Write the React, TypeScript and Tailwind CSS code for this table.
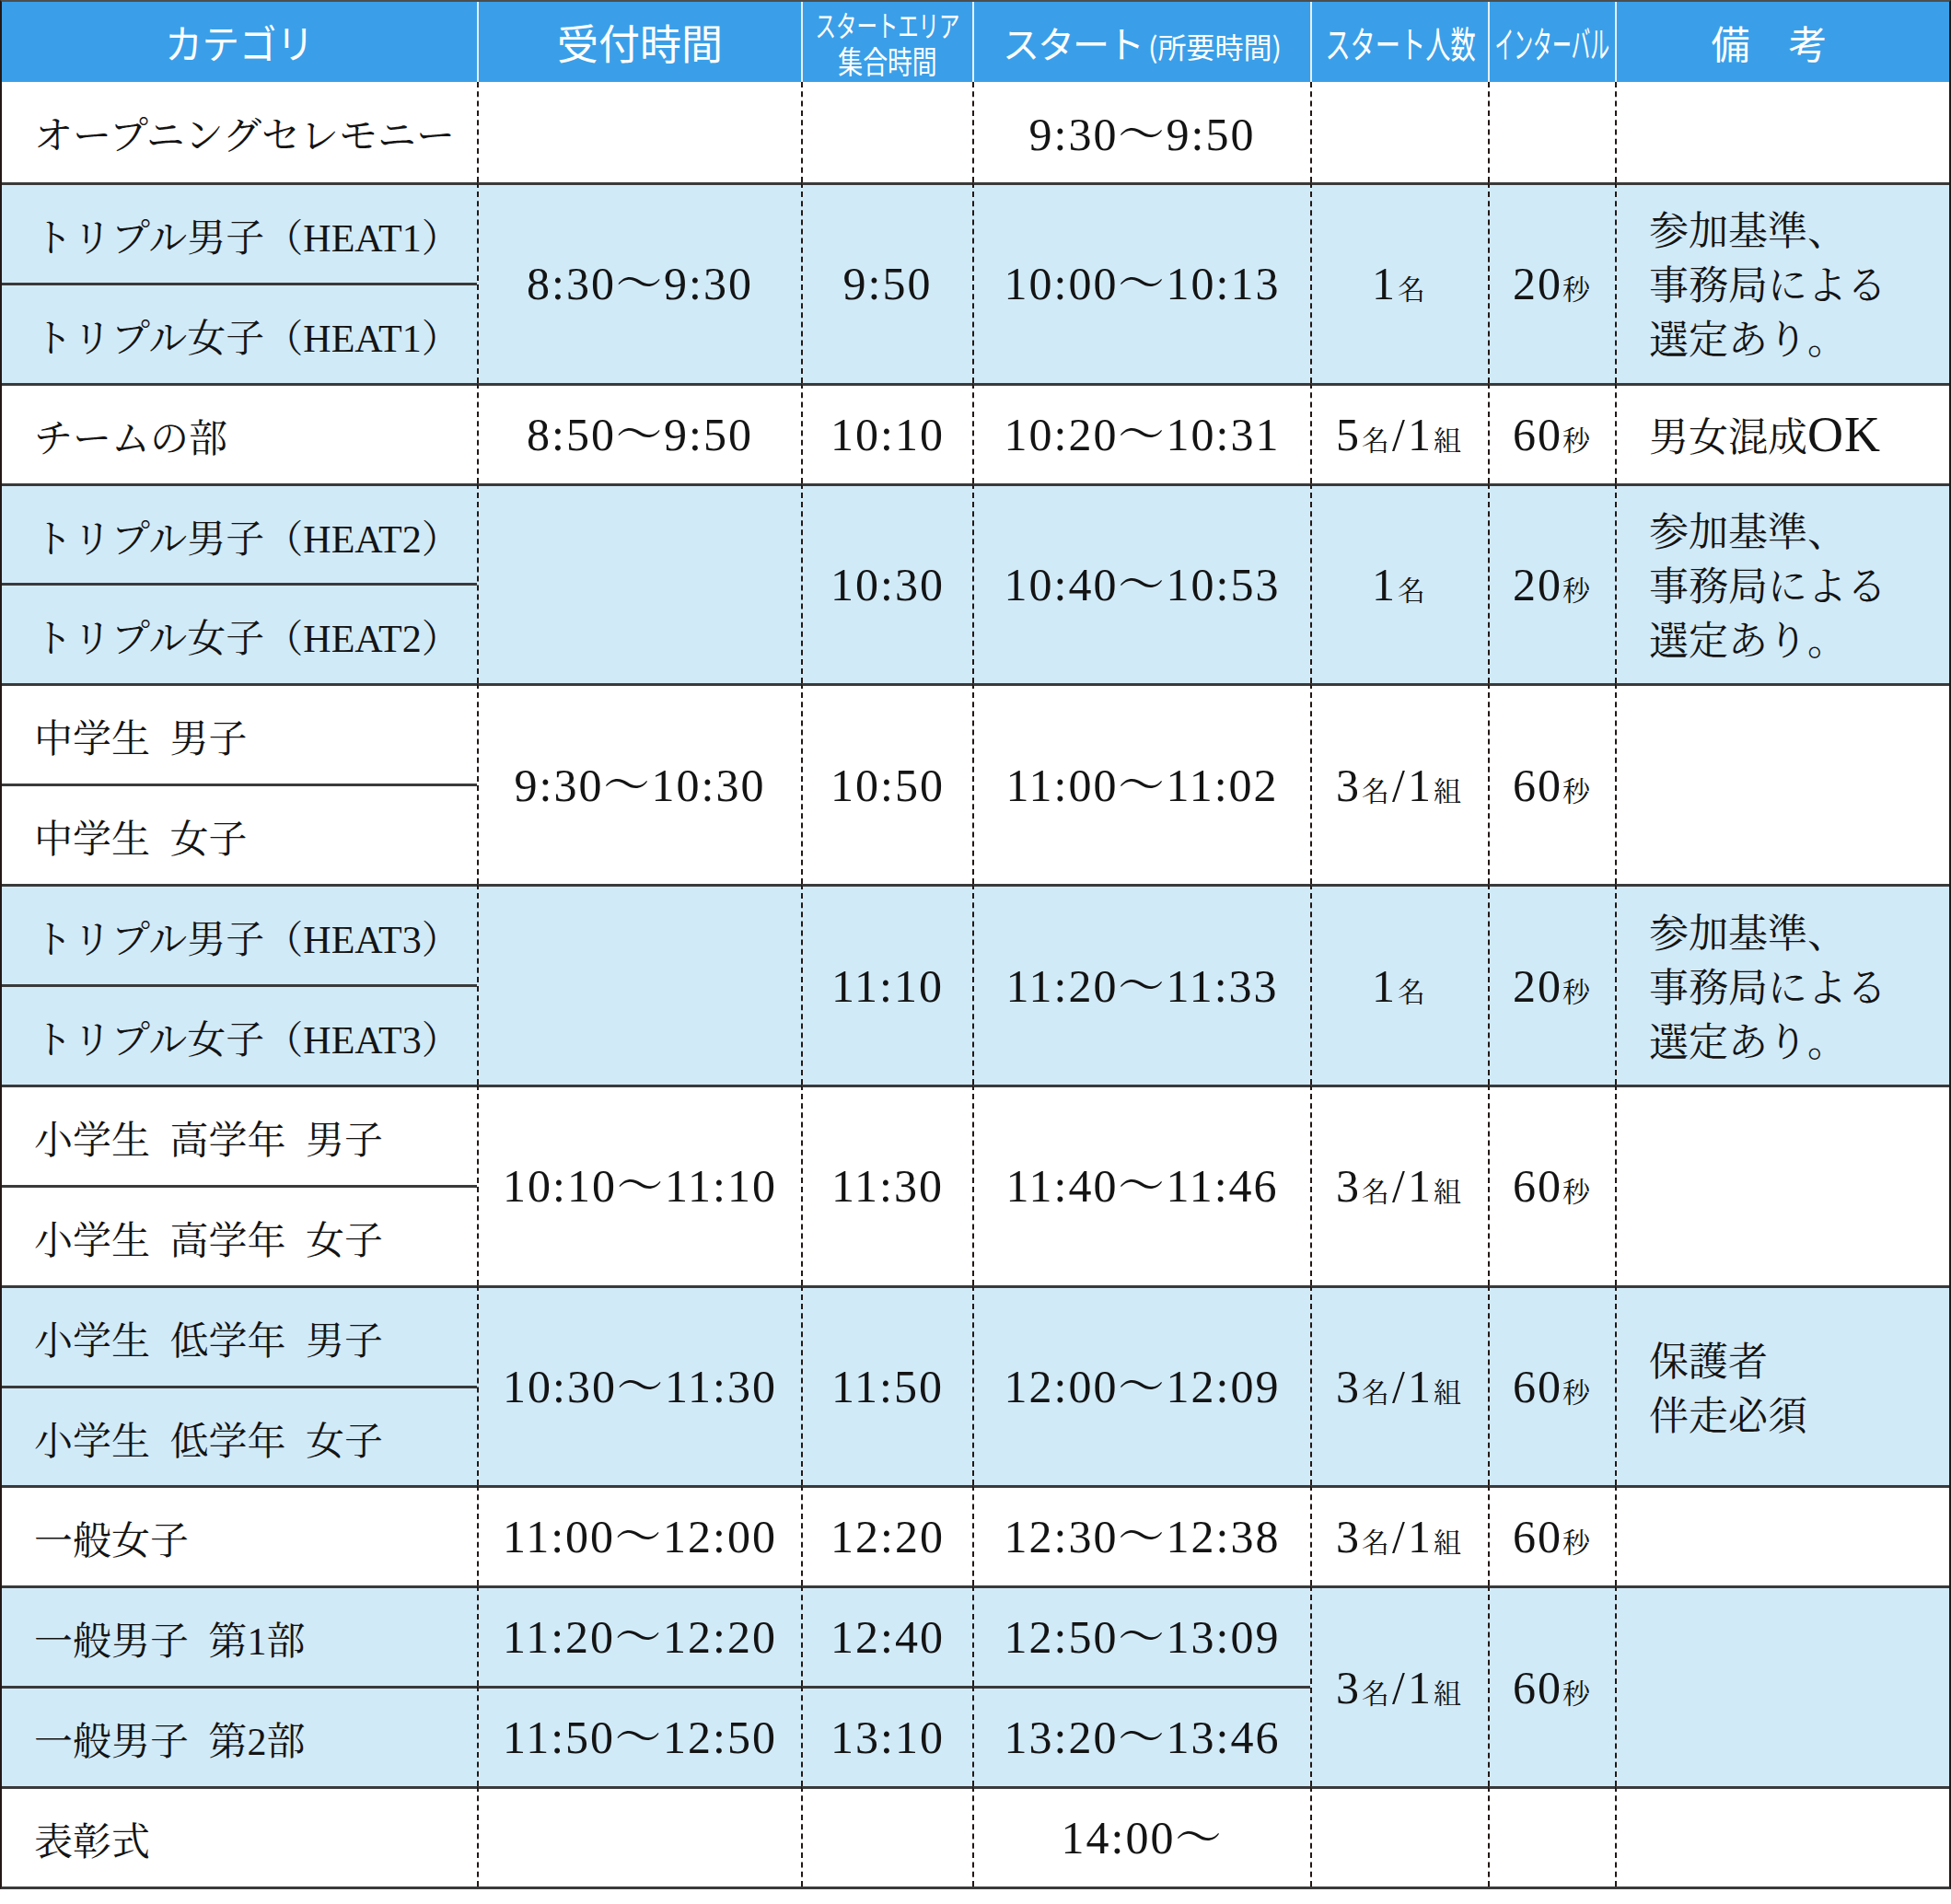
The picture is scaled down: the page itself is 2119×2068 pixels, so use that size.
import type { ReactNode } from "react";

// borders are drawn per cell: solid rule on top, dashed rule on the left
const rule = "[border-top:3px_solid_#3a3a3a]";
const dash = "[border-left:2px_dashed_#231815]";
const hsep = "[border-left:2px_solid_#e8eff4]";

function Cat({ children, top = true }: { children: ReactNode; top?: boolean }) {
  return (
    <td
      className={`p-0 pt-[10px] pl-[35px] text-left align-middle text-[42px] leading-none whitespace-nowrap [word-spacing:11px] ${
        top ? rule : ""
      }`}
    >
      {children}
    </td>
  );
}

function Cell({
  children,
  rowSpan,
  top = false,
}: {
  children?: ReactNode;
  rowSpan?: number;
  top?: boolean;
}) {
  return (
    <td
      rowSpan={rowSpan}
      className={`p-0 text-center align-middle leading-none whitespace-nowrap ${dash} ${top ? rule : ""}`}
    >
      {children}
    </td>
  );
}

function Note({
  children,
  rowSpan,
  top = false,
}: {
  children?: ReactNode;
  rowSpan?: number;
  top?: boolean;
}) {
  return (
    <td
      rowSpan={rowSpan}
      className={`p-0 pt-[5px] pl-[35px] text-left align-middle text-[43px] leading-[59px] whitespace-nowrap ${dash} ${
        top ? rule : ""
      }`}
    >
      {children}
    </td>
  );
}

function Tm({ children }: { children: ReactNode }) {
  return <span className="text-[50px] tracking-[2px]">{children}</span>;
}

function Cnt({ n, group }: { n: string; group?: boolean }) {
  return (
    <span className="tracking-[3px]">
      <span className="text-[50px]">{n}</span>
      <span className="text-[30px]">名</span>
      {group && (
        <>
          <span className="text-[50px]">/1</span>
          <span className="text-[30px]">組</span>
        </>
      )}
    </span>
  );
}

function Sec({ n }: { n: string }) {
  return (
    <span className="tracking-[2px]">
      <span className="text-[50px]">{n}</span>
      <span className="text-[30px]">秒</span>
    </span>
  );
}

function Head() {
  return (
    <tr className="h-[87px] bg-[#3a9fe8] text-white font-['Noto_Sans_CJK_JP','Noto_Sans',sans-serif]">
      <th className="p-0 font-normal">
        <div className="flex justify-center">
          <span className="shrink-0 whitespace-nowrap text-[43px] leading-none scale-x-[0.94]">カテゴリ</span>
        </div>
      </th>
      <th className={`p-0 font-normal ${hsep}`}>
        <div className="flex justify-center">
          <span className="shrink-0 whitespace-nowrap text-[45px] leading-none">受付時間</span>
        </div>
      </th>
      <th className={`p-0 font-normal ${hsep}`}>
        <div className="mt-[2px] flex flex-col items-center gap-[7px] leading-none">
          <span className="shrink-0 whitespace-nowrap text-[32px] scale-x-[0.7]">スタートエリア</span>
          <span className="shrink-0 whitespace-nowrap text-[34px] scale-x-[0.79]">集合時間</span>
        </div>
      </th>
      <th className={`p-0 font-normal ${hsep}`}>
        <div className="flex items-baseline justify-center whitespace-nowrap leading-none">
          <span className="text-[40px] tracking-[-2px]">スタート</span>
          <span className="ml-[6px] text-[31px]">(所要時間)</span>
        </div>
      </th>
      <th className={`p-0 font-normal ${hsep}`}>
        <div className="flex justify-center">
          <span className="shrink-0 whitespace-nowrap text-[40px] leading-none scale-x-[0.68]">スタート人数</span>
        </div>
      </th>
      <th className={`p-0 font-normal ${hsep}`}>
        <div className="flex justify-center">
          <span className="shrink-0 whitespace-nowrap text-[40px] leading-none scale-x-[0.52]">インターバル</span>
        </div>
      </th>
      <th className={`p-0 pr-[30px] font-normal ${hsep}`}>
        <div className="flex justify-center">
          <span className="shrink-0 whitespace-nowrap text-[42px] leading-none">備　考</span>
        </div>
      </th>
    </tr>
  );
}

const blue = "h-[108.9px] bg-[#d1eaf8]";
const white = "h-[108.9px] bg-white";

export default function App() {
  return (
    <div className="bg-white">
      <table className="w-[2119px] table-fixed border-separate border-spacing-0 text-[#141414] font-['Liberation_Serif','Noto_Serif_CJK_JP','Noto_Sans_CJK_JP',serif] [border-top:2px_solid_#4d4d4d] [border-left:2px_solid_#231815] [border-right:2px_solid_#231815] [border-bottom:3px_solid_#3a3a3a]">
        <colgroup>
          <col className="w-[516px]" />
          <col className="w-[352px]" />
          <col className="w-[186px]" />
          <col className="w-[367px]" />
          <col className="w-[193px]" />
          <col className="w-[138px]" />
          <col className="w-[363px]" />
        </colgroup>
        <thead>
          <Head />
        </thead>
        <tbody>
          <tr className={white}>
            <Cat top={false}>オープニングセレモニー</Cat>
            <Cell />
            <Cell />
            <Cell>
              <span className="relative top-[3px]">
                <Tm>9:30〜9:50</Tm>
              </span>
            </Cell>
            <Cell />
            <Cell />
            <Note />
          </tr>

          <tr className={blue}>
            <Cat>トリプル男子（HEAT1）</Cat>
            <Cell rowSpan={2} top>
              <Tm>8:30〜9:30</Tm>
            </Cell>
            <Cell rowSpan={2} top>
              <Tm>9:50</Tm>
            </Cell>
            <Cell rowSpan={2} top>
              <Tm>10:00〜10:13</Tm>
            </Cell>
            <Cell rowSpan={2} top>
              <Cnt n="1" />
            </Cell>
            <Cell rowSpan={2} top>
              <Sec n="20" />
            </Cell>
            <Note rowSpan={2} top>
              参加基準、
              <br />
              事務局による
              <br />
              選定あり。
            </Note>
          </tr>
          <tr className={blue}>
            <Cat>トリプル女子（HEAT1）</Cat>
          </tr>

          <tr className={white}>
            <Cat>チームの部</Cat>
            <Cell top>
              <Tm>8:50〜9:50</Tm>
            </Cell>
            <Cell top>
              <Tm>10:10</Tm>
            </Cell>
            <Cell top>
              <Tm>10:20〜10:31</Tm>
            </Cell>
            <Cell top>
              <Cnt n="5" group />
            </Cell>
            <Cell top>
              <Sec n="60" />
            </Cell>
            <Note top>
              男女混成<span className="text-[54px] tracking-[1px]">OK</span>
            </Note>
          </tr>

          <tr className={blue}>
            <Cat>トリプル男子（HEAT2）</Cat>
            <Cell rowSpan={2} top />
            <Cell rowSpan={2} top>
              <Tm>10:30</Tm>
            </Cell>
            <Cell rowSpan={2} top>
              <Tm>10:40〜10:53</Tm>
            </Cell>
            <Cell rowSpan={2} top>
              <Cnt n="1" />
            </Cell>
            <Cell rowSpan={2} top>
              <Sec n="20" />
            </Cell>
            <Note rowSpan={2} top>
              参加基準、
              <br />
              事務局による
              <br />
              選定あり。
            </Note>
          </tr>
          <tr className={blue}>
            <Cat>トリプル女子（HEAT2）</Cat>
          </tr>

          <tr className={white}>
            <Cat>中学生 男子</Cat>
            <Cell rowSpan={2} top>
              <Tm>9:30〜10:30</Tm>
            </Cell>
            <Cell rowSpan={2} top>
              <Tm>10:50</Tm>
            </Cell>
            <Cell rowSpan={2} top>
              <Tm>11:00〜11:02</Tm>
            </Cell>
            <Cell rowSpan={2} top>
              <Cnt n="3" group />
            </Cell>
            <Cell rowSpan={2} top>
              <Sec n="60" />
            </Cell>
            <Note rowSpan={2} top />
          </tr>
          <tr className={white}>
            <Cat>中学生 女子</Cat>
          </tr>

          <tr className={blue}>
            <Cat>トリプル男子（HEAT3）</Cat>
            <Cell rowSpan={2} top />
            <Cell rowSpan={2} top>
              <Tm>11:10</Tm>
            </Cell>
            <Cell rowSpan={2} top>
              <Tm>11:20〜11:33</Tm>
            </Cell>
            <Cell rowSpan={2} top>
              <Cnt n="1" />
            </Cell>
            <Cell rowSpan={2} top>
              <Sec n="20" />
            </Cell>
            <Note rowSpan={2} top>
              参加基準、
              <br />
              事務局による
              <br />
              選定あり。
            </Note>
          </tr>
          <tr className={blue}>
            <Cat>トリプル女子（HEAT3）</Cat>
          </tr>

          <tr className={white}>
            <Cat>小学生 高学年 男子</Cat>
            <Cell rowSpan={2} top>
              <Tm>10:10〜11:10</Tm>
            </Cell>
            <Cell rowSpan={2} top>
              <Tm>11:30</Tm>
            </Cell>
            <Cell rowSpan={2} top>
              <Tm>11:40〜11:46</Tm>
            </Cell>
            <Cell rowSpan={2} top>
              <Cnt n="3" group />
            </Cell>
            <Cell rowSpan={2} top>
              <Sec n="60" />
            </Cell>
            <Note rowSpan={2} top />
          </tr>
          <tr className={white}>
            <Cat>小学生 高学年 女子</Cat>
          </tr>

          <tr className={blue}>
            <Cat>小学生 低学年 男子</Cat>
            <Cell rowSpan={2} top>
              <Tm>10:30〜11:30</Tm>
            </Cell>
            <Cell rowSpan={2} top>
              <Tm>11:50</Tm>
            </Cell>
            <Cell rowSpan={2} top>
              <Tm>12:00〜12:09</Tm>
            </Cell>
            <Cell rowSpan={2} top>
              <Cnt n="3" group />
            </Cell>
            <Cell rowSpan={2} top>
              <Sec n="60" />
            </Cell>
            <Note rowSpan={2} top>
              保護者
              <br />
              伴走必須
            </Note>
          </tr>
          <tr className={blue}>
            <Cat>小学生 低学年 女子</Cat>
          </tr>

          <tr className={white}>
            <Cat>一般女子</Cat>
            <Cell top>
              <Tm>11:00〜12:00</Tm>
            </Cell>
            <Cell top>
              <Tm>12:20</Tm>
            </Cell>
            <Cell top>
              <Tm>12:30〜12:38</Tm>
            </Cell>
            <Cell top>
              <Cnt n="3" group />
            </Cell>
            <Cell top>
              <Sec n="60" />
            </Cell>
            <Note top />
          </tr>

          <tr className={blue}>
            <Cat>一般男子 第1部</Cat>
            <Cell top>
              <Tm>11:20〜12:20</Tm>
            </Cell>
            <Cell top>
              <Tm>12:40</Tm>
            </Cell>
            <Cell top>
              <Tm>12:50〜13:09</Tm>
            </Cell>
            <Cell rowSpan={2} top>
              <Cnt n="3" group />
            </Cell>
            <Cell rowSpan={2} top>
              <Sec n="60" />
            </Cell>
            <Note rowSpan={2} top />
          </tr>
          <tr className={blue}>
            <Cat>一般男子 第2部</Cat>
            <Cell top>
              <Tm>11:50〜12:50</Tm>
            </Cell>
            <Cell top>
              <Tm>13:10</Tm>
            </Cell>
            <Cell top>
              <Tm>13:20〜13:46</Tm>
            </Cell>
          </tr>

          <tr className={white}>
            <Cat>表彰式</Cat>
            <Cell top />
            <Cell top />
            <Cell top>
              <Tm>14:00〜</Tm>
            </Cell>
            <Cell top />
            <Cell top />
            <Note top />
          </tr>
        </tbody>
      </table>
    </div>
  );
}
